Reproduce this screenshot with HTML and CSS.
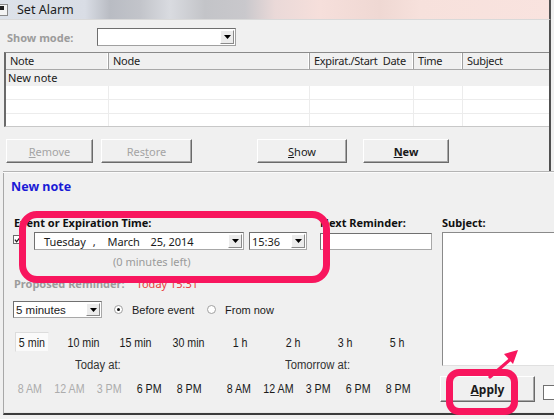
FILE: index.html
```html
<!DOCTYPE html>
<html>
<head>
<meta charset="utf-8">
<link rel="stylesheet" href="styles.css">
</head>
<body>
<div class="screen">
  <div class="titlebar">
    <svg class="appicon" width="9" height="12" viewBox="0 0 9 12"><rect x="0.5" y="0.5" width="8" height="11" fill="#f4f4f4" stroke="#8a8a8a"/><rect x="0" y="2" width="5" height="4" fill="#202020"/></svg>
    <span class="title">Set Alarm</span>
  </div>

  <div class="top">
    <div class="showmode">
      <span class="lbl-grey">Show mode:</span>
      <div class="combo combo-show"><span class="ddbtn"><svg width="7" height="4" viewBox="0 0 7 4"><path d="M0 0h7L3.5 4z" fill="#000"/></svg></span></div>
    </div>

    <div class="list">
      <div class="lrow lhead">
        <div class="cell c1">Note</div>
        <div class="cell c2">Node</div>
        <div class="cell c3">Expirat./Start&nbsp; Date</div>
        <div class="cell c4">Time</div>
        <div class="cell c5">Subject</div>
      </div>
      <div class="lrow sel">
        <div class="cell c1">New note</div>
        <div class="cell c2"></div>
        <div class="cell c3"></div>
        <div class="cell c4"></div>
        <div class="cell c5"></div>
      </div>
      <div class="lrow empty">
        <div class="cell c1"></div><div class="cell c2"></div><div class="cell c3"></div><div class="cell c4"></div><div class="cell c5"></div>
      </div>
      <div class="lrow empty">
        <div class="cell c1"></div><div class="cell c2"></div><div class="cell c3"></div><div class="cell c4"></div><div class="cell c5"></div>
      </div>
      <div class="lrow empty last">
        <div class="cell c1"></div><div class="cell c2"></div><div class="cell c3"></div><div class="cell c4"></div><div class="cell c5"></div>
      </div>
    </div>

    <div class="btnrow">
      <div class="btn dis b-remove"><u>R</u>emove</div>
      <div class="btn dis b-restore">Res<u>t</u>ore</div>
      <div class="btn b-show"><u>S</u>how</div>
      <div class="btn bold b-new"><u>N</u>ew</div>
    </div>
  </div>

  <div class="sep"></div>

  <div class="panel">
    <div class="panel-title">New note</div>
    <div class="pgrid">
      <div class="leftcol">
        <div class="labels">
          <span class="lbl lbl-event">Event or Expiration Time:</span>
          <span class="lbl">Next Reminder:</span>
        </div>
        <div class="controls">
          <span class="check"><svg width="8" height="8" viewBox="0 0 8 8"><path d="M1 3.5l2 2.5 4-5" fill="none" stroke="#222" stroke-width="1.4"/></svg></span>
          <div class="field date">
            <span class="d-day">Tuesday</span><span class="d-comma">,</span><span class="d-month">March</span><span class="d-num">25, 2014</span>
            <span class="ddbtn"><svg width="7" height="4" viewBox="0 0 7 4"><path d="M0 0h7L3.5 4z" fill="#000"/></svg></span>
          </div>
          <div class="field time">
            <span>15:36</span>
            <span class="ddbtn"><svg width="7" height="4" viewBox="0 0 7 4"><path d="M0 0h7L3.5 4z" fill="#000"/></svg></span>
          </div>
          <div class="field next"></div>
        </div>
        <div class="left-info">(0 minutes left)</div>
        <div class="proposed"><span class="lbl-grey">Proposed Reminder:</span><span class="today">Today 15:31</span></div>
        <div class="remrow">
          <div class="field combo-min">
            <span>5 minutes</span>
            <span class="ddbtn"><svg width="7" height="4" viewBox="0 0 7 4"><path d="M0 0h7L3.5 4z" fill="#000"/></svg></span>
          </div>
          <label class="radio r-before"><span class="rdot on"></span>Before event</label>
          <label class="radio"><span class="rdot"></span>From now</label>
        </div>
        <div class="quick">
          <div class="q"><span class="qbtn"><span class="nt">5 min</span></span></div>
          <div class="q"><span class="nt">10 min</span></div>
          <div class="q"><span class="nt">15 min</span></div>
          <div class="q"><span class="nt">30 min</span></div>
          <div class="q"><span class="nt">1 h</span></div>
          <div class="q"><span class="nt">2 h</span></div>
          <div class="q"><span class="nt">3 h</span></div>
          <div class="q"><span class="nt">5 h</span></div>
        </div>
        <div class="daylabels">
          <span class="dl-today"><span class="nt2">Today at:</span></span>
          <span class="dl-tomorrow"><span class="nt2">Tomorrow at:</span></span>
        </div>
        <div class="times">
          <div class="tgroup">
            <span class="t grey"><span class="nt">8 AM</span></span>
            <span class="t grey"><span class="nt">12 AM</span></span>
            <span class="t grey"><span class="nt">3 PM</span></span>
            <span class="t"><span class="nt">6 PM</span></span>
            <span class="t"><span class="nt">8 PM</span></span>
          </div>
          <div class="tgroup">
            <span class="t"><span class="nt">8 AM</span></span>
            <span class="t"><span class="nt">12 AM</span></span>
            <span class="t"><span class="nt">3 PM</span></span>
            <span class="t"><span class="nt">6 PM</span></span>
            <span class="t"><span class="nt">8 PM</span></span>
          </div>
        </div>
      </div>
      <div class="rightcol">
        <span class="lbl">Subject:</span>
        <div class="subject"></div>
        <div class="applyrow">
          <div class="btn bold b-apply"><u>A</u>pply</div>
          <span class="smallbox"></span>
        </div>
      </div>
    </div>
  </div>

  <div class="mark mark-date"></div>
  <div class="mark mark-apply"></div>
  <svg class="arrow" width="40" height="36" viewBox="0 0 40 36">
    <path d="M6 32 L28 13" stroke="#f8165e" stroke-width="3.2" fill="none" stroke-linecap="round"/>
    <path d="M34 5 L20 9 L29 19 Z" fill="#f8165e"/>
  </svg>
</div>
</body>
</html>
```

FILE: styles.css
```css
* { box-sizing: border-box; }
html, body { margin: 0; padding: 0; background: #ffffff; }
body { font-family: "Noto Sans", "Open Sans", sans-serif; font-size: 11px; color: #1a1a1a; }

.screen {
  position: relative;
  width: 554px;
  height: 419px;
  overflow: hidden;
  background: #f0f0f0;
}

/* title bar */
.titlebar {
  height: 20px;
  display: flex;
  align-items: center;
  border-bottom: 1px solid #d9d9d9;
  margin-right: 3px;
  border-right: 2px solid #505050;
  background: linear-gradient(90deg, #dde2ea 0, #d9dde5 85px, #b9bcc3 110px, #c2c4ca 140px, #d9dbe0 170px, #c3c4c8 205px, #c9c8cc 245px, #ead9d8 275px, #f6dfdb 320px, #efd8d3 380px, #f7e1dc 420px, #f9e3df 550px);
}
.appicon { margin-left: -1px; margin-top: 1px; }
.title { margin-left: 9px; font-size: 12.5px; color: #1c1c1c; }

/* top region */
.top {
  border-right: 2px solid #505050;
  margin-right: 3px;
  padding-bottom: 8px;
}
.showmode {
  height: 32px;
  display: flex;
  align-items: center;
  padding-left: 7px;
  padding-top: 2px;
}
.lbl-grey { font-weight: 700; color: #9c9c9c; font-size: 11px; }
.combo {
  background: #fff;
  border: 1px solid #a0a0a0;
  border-top-color: #6e6e6e;
  border-left-color: #6e6e6e;
  position: relative;
}
.combo-show { margin-left: 24px; width: 139px; height: 18px; }
.ddbtn {
  position: absolute;
  right: 1px;
  top: 1px;
  bottom: 1px;
  width: 14px;
  background: #ececec;
  border: 1px solid #fff;
  border-right-color: #8a8a8a;
  border-bottom-color: #8a8a8a;
  display: flex;
  align-items: center;
  justify-content: center;
}

.list {
  margin-left: 4px;
  height: 75px;
  background: #fff;
  border-top: 1px solid #8a8a8a;
  border-left: 2px solid #6a6a6a;
  border-bottom: 1px solid #c8c8c8;
  display: flex;
  flex-direction: column;
}
.lrow { display: flex; }
.cell { border-right: 1px solid #ececec; padding-left: 3px; white-space: nowrap; overflow: hidden; }
.c1 { width: 103px; }
.c2 { width: 201px; }
.c3 { width: 104px; }
.c4 { width: 49px; }
.c5 { flex: 1; border-right: 0; }
.lhead { height: 17px; background: #f0f0f0; border-bottom: 1px solid #a8a8a8; align-items: center; font-size: 11px; letter-spacing: -0.3px; }
.lhead .cell { border-right: 1px solid #a0a0a0; box-shadow: inset -1px 0 0 #fff; height: 16px; line-height: 16px; padding-left: 4px; color: #222; }
.lhead .c5 { border-right: 0; box-shadow: none; }
.sel { height: 16px; background: #f0f0f0; line-height: 15px; font-size: 11px; }
.sel .cell { border-right: 0; padding-left: 2px; }
.empty { height: 14px; border-bottom: 1px solid #ececec; }
.empty.last { border-bottom: 0; flex: 1; }

.btnrow {
  margin-top: 12px;
  display: flex;
  height: 24px;
}
.btn {
  height: 24px;
  display: flex;
  align-items: center;
  justify-content: center;
  background: #f0f0f0;
  border: 1px solid #fff;
  border-right-color: #6a6a6a;
  border-bottom-color: #6a6a6a;
  box-shadow: inset -1px -1px 0 #a8a8a8;
  font-size: 11px;
  color: #1a1a1a;
}
.btn.dis { color: #a4a4a4; }
.btn.bold { font-weight: 700; }
.b-remove { margin-left: 6px; width: 87px; }
.b-restore { margin-left: 8px; width: 91px; }
.b-show { margin-left: 65px; width: 90px; }
.b-new { margin-left: 16px; width: 86px; }

.sep {
  height: 2px;
  border-top: 1px solid #b4b4b4;
  border-bottom: 1px solid #fbfbfb;
  margin-left: 3px;
}

/* panel */
.panel {
  margin-left: 3px;
  height: 242px;
  border-left: 1px solid #a8a8a8;
  border-bottom: 2px solid #3c3c3c;
  box-shadow: 0 -1px 0 #e8e8e8 inset;
}
.panel-title {
  padding-left: 7px;
  padding-top: 6px;
  height: 22px;
  font-weight: 700;
  font-size: 12.5px;
  color: #1a1ad6;
  line-height: 16px;
}
.pgrid {
  margin-top: 21px;
  display: grid;
  grid-template-columns: 428px 1fr;
  column-gap: 10px;
}
.leftcol { padding-left: 10px; display: flex; flex-direction: column; }
.lbl { font-weight: 700; font-size: 11px; color: #111; line-height: 14px; height: 14px; white-space: nowrap; }
.labels { display: flex; height: 14px; }
.lbl-event { width: 306px; }

.controls { display: flex; margin-top: 2px; height: 18px; align-items: flex-start; }
.check {
  width: 9px; height: 9px; margin-left: -1px; margin-top: 3px;
  border: 1px solid #6a6a6a; background: #fff;
  display: flex; align-items: center; justify-content: center;
}
.field {
  position: relative;
  background: #fff;
  border: 1px solid #a8a8a8;
  border-top-color: #707070;
  border-left-color: #707070;
  display: flex;
  align-items: center;
  white-space: nowrap;
  font-size: 11px;
}
.date { margin-left: 12px; width: 210px; height: 18px; padding-left: 9px; letter-spacing: -0.1px; }
.d-comma { margin-left: 7px; }
.d-month { margin-left: 12px; }
.d-num { margin-left: 11px; }
.time { margin-left: 5px; width: 58px; height: 18px; padding-left: 2px; }
.next { margin-left: 13px; width: 112px; height: 17px; margin-top: 1px; }

.left-info { margin-top: 6px; height: 12px; line-height: 12px; padding-left: 99px; color: #9a9a9a; font-size: 11px; }
.proposed { margin-top: 9px; height: 14px; line-height: 14px; display: flex; }
.today { margin-left: 12px; color: #e83a3a; font-size: 11px; }

.remrow { margin-top: 10px; height: 17px; display: flex; align-items: center; font-family: "Liberation Sans", Arial, sans-serif; }
.combo-min { margin-left: -1px; width: 89px; height: 17px; padding-left: 2px; font-family: "Liberation Sans", Arial, sans-serif; font-size: 11.5px; }
.radio { display: flex; align-items: center; font-size: 11px; color: #1a1a1a; }
.r-before { margin-left: 12px; width: 93px; }
.rdot {
  width: 9px; height: 9px; border-radius: 50%;
  border: 1px solid #a0a0a0; background: #fff;
  margin-right: 9px; position: relative;
}
.rdot.on::after {
  content: ""; position: absolute; left: 2px; top: 2px; width: 3px; height: 3px; border-radius: 50%; background: #111;
}

.nt { display: inline-block; transform: scaleX(0.82); white-space: nowrap; }
.nt2 { display: inline-block; transform: scaleX(0.9); transform-origin: left center; white-space: nowrap; }

.quick {
  margin-top: 14px;
  margin-left: -9px;
  height: 20px;
  display: flex;
  font-family: "Liberation Sans", Arial, sans-serif;
  font-size: 13px;
}
.q { width: 52.3px; display: flex; align-items: center; justify-content: center; color: #1a1a1a; }
.qbtn {
  width: 34px; height: 20px; display: flex; align-items: center; justify-content: center;
  background: #fafafa; border: 1px solid #dcdcdc; border-right-color: #f0f0f0; border-bottom-color: #f0f0f0;
  margin-left: 1px;
}

.daylabels {
  margin-top: 7px;
  height: 12px;
  line-height: 12px;
  display: flex;
  font-family: "Liberation Sans", Arial, sans-serif;
  font-size: 12.5px;
  color: #333;
}
.dl-today { margin-left: 61px; width: 210px; }

.times {
  margin-top: 11px;
  margin-left: -4px;
  height: 14px;
  display: flex;
  gap: 10px;
  font-family: "Liberation Sans", Arial, sans-serif;
  font-size: 13px;
}
.tgroup { display: flex; }
.t { width: 39.8px; text-align: center; line-height: 14px; color: #1a1a1a; }
.t.grey { color: #acacac; }

.rightcol { display: flex; flex-direction: column; }
.subject {
  margin-top: 2px;
  height: 134px;
  margin-right: -4px;
  background: #fff;
  border-left: 1px solid #8a8a8a;
  border-top: 1px solid #8a8a8a;
  border-bottom: 1px solid #e0e0e0;
}
.applyrow { margin-top: 10px; display: flex; margin-left: -2px; }
.b-apply { width: 95px; height: 26px; font-size: 12px; }
.smallbox {
  margin-left: 8px; margin-top: 9px; width: 14px; height: 15px;
  border: 1px solid #707070; border-right: 0; background: #fff;
}

/* annotations */
.mark {
  position: absolute;
  border: 7px solid #f8165e;
  border-radius: 18px;
}
.mark-date { left: 19px; top: 211px; width: 311px; height: 72px; }
.mark-apply { left: 446px; top: 369px; width: 72px; height: 46px; border-radius: 13px; }
.arrow { position: absolute; left: 484px; top: 345px; }
```
